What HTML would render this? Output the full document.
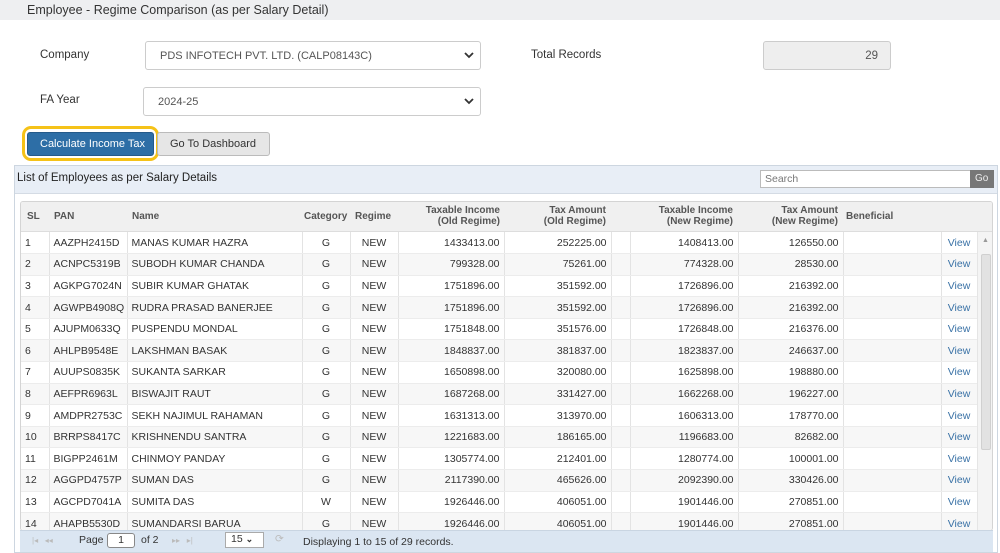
<!DOCTYPE html>
<html><head><meta charset="utf-8"><style>
*{box-sizing:border-box;margin:0;padding:0}
body{width:1000px;height:553px;overflow:hidden;background:#fff;font-family:"Liberation Sans",Arial,sans-serif;position:relative;color:#333}
.abs{position:absolute}
.title{left:0;top:0;width:1000px;height:20px;background:#eeeff1;font-size:12.5px;color:#333;padding:3px 0 0 27px}
.lbl{font-size:11.5px;color:#333}
.sel{border:1px solid #ccc;border-radius:3px;background:#fff;font-size:11px;color:#555;padding:8px 0 0 14px}
.chev{position:absolute;right:6px;top:8px}
.btn{font-size:11px;border-radius:3px;white-space:nowrap}
table{border-collapse:collapse;table-layout:fixed;font-size:10.5px}
td{height:21.6px;border-right:1px solid #e3e3e3;border-bottom:1px solid #ececec;padding:0 4px;white-space:nowrap;overflow:hidden;color:#333}
tr:nth-child(even) td{background:#f7f7f7}
.r{text-align:right}.c{text-align:center}
.v{color:#3a72a6;text-align:center}
.h{position:absolute;font-size:10px;color:#555;font-weight:bold;line-height:11px}
</style></head><body>
<div class="abs title">Employee - Regime Comparison (as per Salary Detail)</div>
<div class="abs lbl" style="left:40px;top:49px">Company</div>
<div class="abs sel" style="left:145px;top:41px;width:336px;height:29px">PDS INFOTECH PVT. LTD. (CALP08143C)<svg class="chev" width="10" height="10" viewBox="0 0 10 10"><path d="M1 3l4 4 4-4" stroke="#333" stroke-width="1.8" fill="none"/></svg></div>
<div class="abs lbl" style="left:531px;top:49px">Total Records</div>
<div class="abs" style="left:763px;top:41px;width:128px;height:29px;background:#eee;border:1px solid #ccc;border-radius:3px;font-size:11.5px;color:#555;text-align:right;padding:8px 12px 0 0">29</div>
<div class="abs lbl" style="left:40px;top:94px">FA Year</div>
<div class="abs sel" style="left:143px;top:87px;width:338px;height:29px">2024-25<svg class="chev" width="10" height="10" viewBox="0 0 10 10"><path d="M1 3l4 4 4-4" stroke="#333" stroke-width="1.8" fill="none"/></svg></div>
<div class="abs" style="left:22px;top:126px;width:137px;height:35px;border:3px solid #f5c218;border-radius:9px"></div>
<div class="abs btn" style="left:27px;top:132px;width:127px;height:24px;background:#2d6ea6;color:#fff;border:1px solid #245a8a;padding:5px 0 0 12px">Calculate Income Tax</div>
<div class="abs btn" style="left:157px;top:132px;width:113px;height:24px;background:#e6e6e6;color:#333;border:1px solid #bbb;padding:5px 0 0 12px">Go To Dashboard</div>
<div class="abs" style="left:14px;top:165px;width:984px;height:388px;border:1px solid #cdd6e0;background:#fff"></div>
<div class="abs" style="left:15px;top:166px;width:982px;height:28px;background:#e8eef6;border-bottom:1px solid #d4dbe4"></div>
<div class="abs" style="left:17px;top:172px;font-size:11.5px;color:#222">List of Employees as per Salary Details</div>
<div class="abs" style="left:760px;top:170px;width:211px;height:18px;border:1px solid #bbb;background:#fff;font-size:10.5px;color:#777;padding:2px 0 0 4px">Search</div>
<div class="abs" style="left:970px;top:170px;width:24px;height:18px;background:#777;color:#eee;font-size:10px;padding:3px 0 0 5px">Go</div>
<div class="abs" style="left:20px;top:201px;width:973px;height:330px;border:1px solid #d4d4d4;border-radius:3px;overflow:hidden">
<div style="height:30px;background:#f0f0f0;border-bottom:1px solid #ddd;position:relative">
<span class="h" style="left:6px;top:9px">SL</span>
<span class="h" style="left:33px;top:9px">PAN</span>
<span class="h" style="left:111px;top:9px">Name</span>
<span class="h" style="left:283px;top:9px">Category</span>
<span class="h" style="left:334px;top:9px">Regime</span>
<span class="h" style="left:390px;top:3px;text-align:right;width:89px">Taxable Income<br>(Old Regime)</span>
<span class="h" style="left:490px;top:3px;text-align:right;width:95px">Tax Amount<br>(Old Regime)</span>
<span class="h" style="left:620px;top:3px;text-align:right;width:92px">Taxable Income<br>(New Regime)</span>
<span class="h" style="left:720px;top:3px;text-align:right;width:97px">Tax Amount<br>(New Regime)</span>
<span class="h" style="left:825px;top:9px">Beneficial</span>
</div>
<table style="width:956px">
<colgroup><col style="width:28px"><col style="width:78px"><col style="width:175px"><col style="width:48px"><col style="width:48px"><col style="width:106px"><col style="width:107px"><col style="width:19px"><col style="width:108px"><col style="width:105px"><col style="width:98px"><col style="width:36px"></colgroup>
<tr><td>1</td><td>AAZPH2415D</td><td>MANAS KUMAR HAZRA</td><td class="c">G</td><td class="c">NEW</td><td class="r">1433413.00</td><td class="r">252225.00</td><td></td><td class="r">1408413.00</td><td class="r">126550.00</td><td></td><td class="v">View</td></tr>
<tr><td>2</td><td>ACNPC5319B</td><td>SUBODH KUMAR CHANDA</td><td class="c">G</td><td class="c">NEW</td><td class="r">799328.00</td><td class="r">75261.00</td><td></td><td class="r">774328.00</td><td class="r">28530.00</td><td></td><td class="v">View</td></tr>
<tr><td>3</td><td>AGKPG7024N</td><td>SUBIR KUMAR GHATAK</td><td class="c">G</td><td class="c">NEW</td><td class="r">1751896.00</td><td class="r">351592.00</td><td></td><td class="r">1726896.00</td><td class="r">216392.00</td><td></td><td class="v">View</td></tr>
<tr><td>4</td><td>AGWPB4908Q</td><td>RUDRA PRASAD BANERJEE</td><td class="c">G</td><td class="c">NEW</td><td class="r">1751896.00</td><td class="r">351592.00</td><td></td><td class="r">1726896.00</td><td class="r">216392.00</td><td></td><td class="v">View</td></tr>
<tr><td>5</td><td>AJUPM0633Q</td><td>PUSPENDU MONDAL</td><td class="c">G</td><td class="c">NEW</td><td class="r">1751848.00</td><td class="r">351576.00</td><td></td><td class="r">1726848.00</td><td class="r">216376.00</td><td></td><td class="v">View</td></tr>
<tr><td>6</td><td>AHLPB9548E</td><td>LAKSHMAN BASAK</td><td class="c">G</td><td class="c">NEW</td><td class="r">1848837.00</td><td class="r">381837.00</td><td></td><td class="r">1823837.00</td><td class="r">246637.00</td><td></td><td class="v">View</td></tr>
<tr><td>7</td><td>AUUPS0835K</td><td>SUKANTA SARKAR</td><td class="c">G</td><td class="c">NEW</td><td class="r">1650898.00</td><td class="r">320080.00</td><td></td><td class="r">1625898.00</td><td class="r">198880.00</td><td></td><td class="v">View</td></tr>
<tr><td>8</td><td>AEFPR6963L</td><td>BISWAJIT RAUT</td><td class="c">G</td><td class="c">NEW</td><td class="r">1687268.00</td><td class="r">331427.00</td><td></td><td class="r">1662268.00</td><td class="r">196227.00</td><td></td><td class="v">View</td></tr>
<tr><td>9</td><td>AMDPR2753C</td><td>SEKH NAJIMUL RAHAMAN</td><td class="c">G</td><td class="c">NEW</td><td class="r">1631313.00</td><td class="r">313970.00</td><td></td><td class="r">1606313.00</td><td class="r">178770.00</td><td></td><td class="v">View</td></tr>
<tr><td>10</td><td>BRRPS8417C</td><td>KRISHNENDU SANTRA</td><td class="c">G</td><td class="c">NEW</td><td class="r">1221683.00</td><td class="r">186165.00</td><td></td><td class="r">1196683.00</td><td class="r">82682.00</td><td></td><td class="v">View</td></tr>
<tr><td>11</td><td>BIGPP2461M</td><td>CHINMOY PANDAY</td><td class="c">G</td><td class="c">NEW</td><td class="r">1305774.00</td><td class="r">212401.00</td><td></td><td class="r">1280774.00</td><td class="r">100001.00</td><td></td><td class="v">View</td></tr>
<tr><td>12</td><td>AGGPD4757P</td><td>SUMAN DAS</td><td class="c">G</td><td class="c">NEW</td><td class="r">2117390.00</td><td class="r">465626.00</td><td></td><td class="r">2092390.00</td><td class="r">330426.00</td><td></td><td class="v">View</td></tr>
<tr><td>13</td><td>AGCPD7041A</td><td>SUMITA DAS</td><td class="c">W</td><td class="c">NEW</td><td class="r">1926446.00</td><td class="r">406051.00</td><td></td><td class="r">1901446.00</td><td class="r">270851.00</td><td></td><td class="v">View</td></tr>
<tr><td>14</td><td>AHAPB5530D</td><td>SUMANDARSI BARUA</td><td class="c">G</td><td class="c">NEW</td><td class="r">1926446.00</td><td class="r">406051.00</td><td></td><td class="r">1901446.00</td><td class="r">270851.00</td><td></td><td class="v">View</td></tr>
</table>
<div class="abs" style="left:956px;top:30px;width:16px;height:300px;background:#f4f4f4;border-left:1px solid #e5e5e5">
<div style="position:absolute;left:3px;top:22px;width:10px;height:196px;background:#e2e2e2;border:1px solid #d0d0d0;border-radius:2px"></div>
<div style="position:absolute;left:4px;top:5px;font-size:7px;color:#999">▲</div>
</div>
</div>
<div class="abs" style="left:20px;top:530px;width:973px;height:22px;background:#dbe6f2;border-top:1px solid #c9d5e2;font-size:10.5px;color:#333">
<span class="abs" style="left:12px;top:5px;color:#bbb;font-size:8px">|◂ &nbsp; ◂◂</span>
<span class="abs" style="left:59px;top:3px">Page</span>
<span class="abs" style="left:87px;top:2px;width:28px;height:15px;border:1px solid #888;border-radius:3px;background:#fff;text-align:center">1</span>
<span class="abs" style="left:121px;top:3px">of 2</span>
<span class="abs" style="left:152px;top:5px;color:#bbb;font-size:8px">▸▸ &nbsp; ▸|</span>
<span class="abs" style="left:205px;top:1px;width:39px;height:16px;border:1px solid #aaa;background:#fff;padding-left:5px">15 <b style="font-size:9px">⌄</b></span>
<span class="abs" style="left:255px;top:2px;color:#bbb">⟳</span>
<span class="abs" style="left:283px;top:5px">Displaying 1 to 15 of 29 records.</span>
</div>
</body></html>
